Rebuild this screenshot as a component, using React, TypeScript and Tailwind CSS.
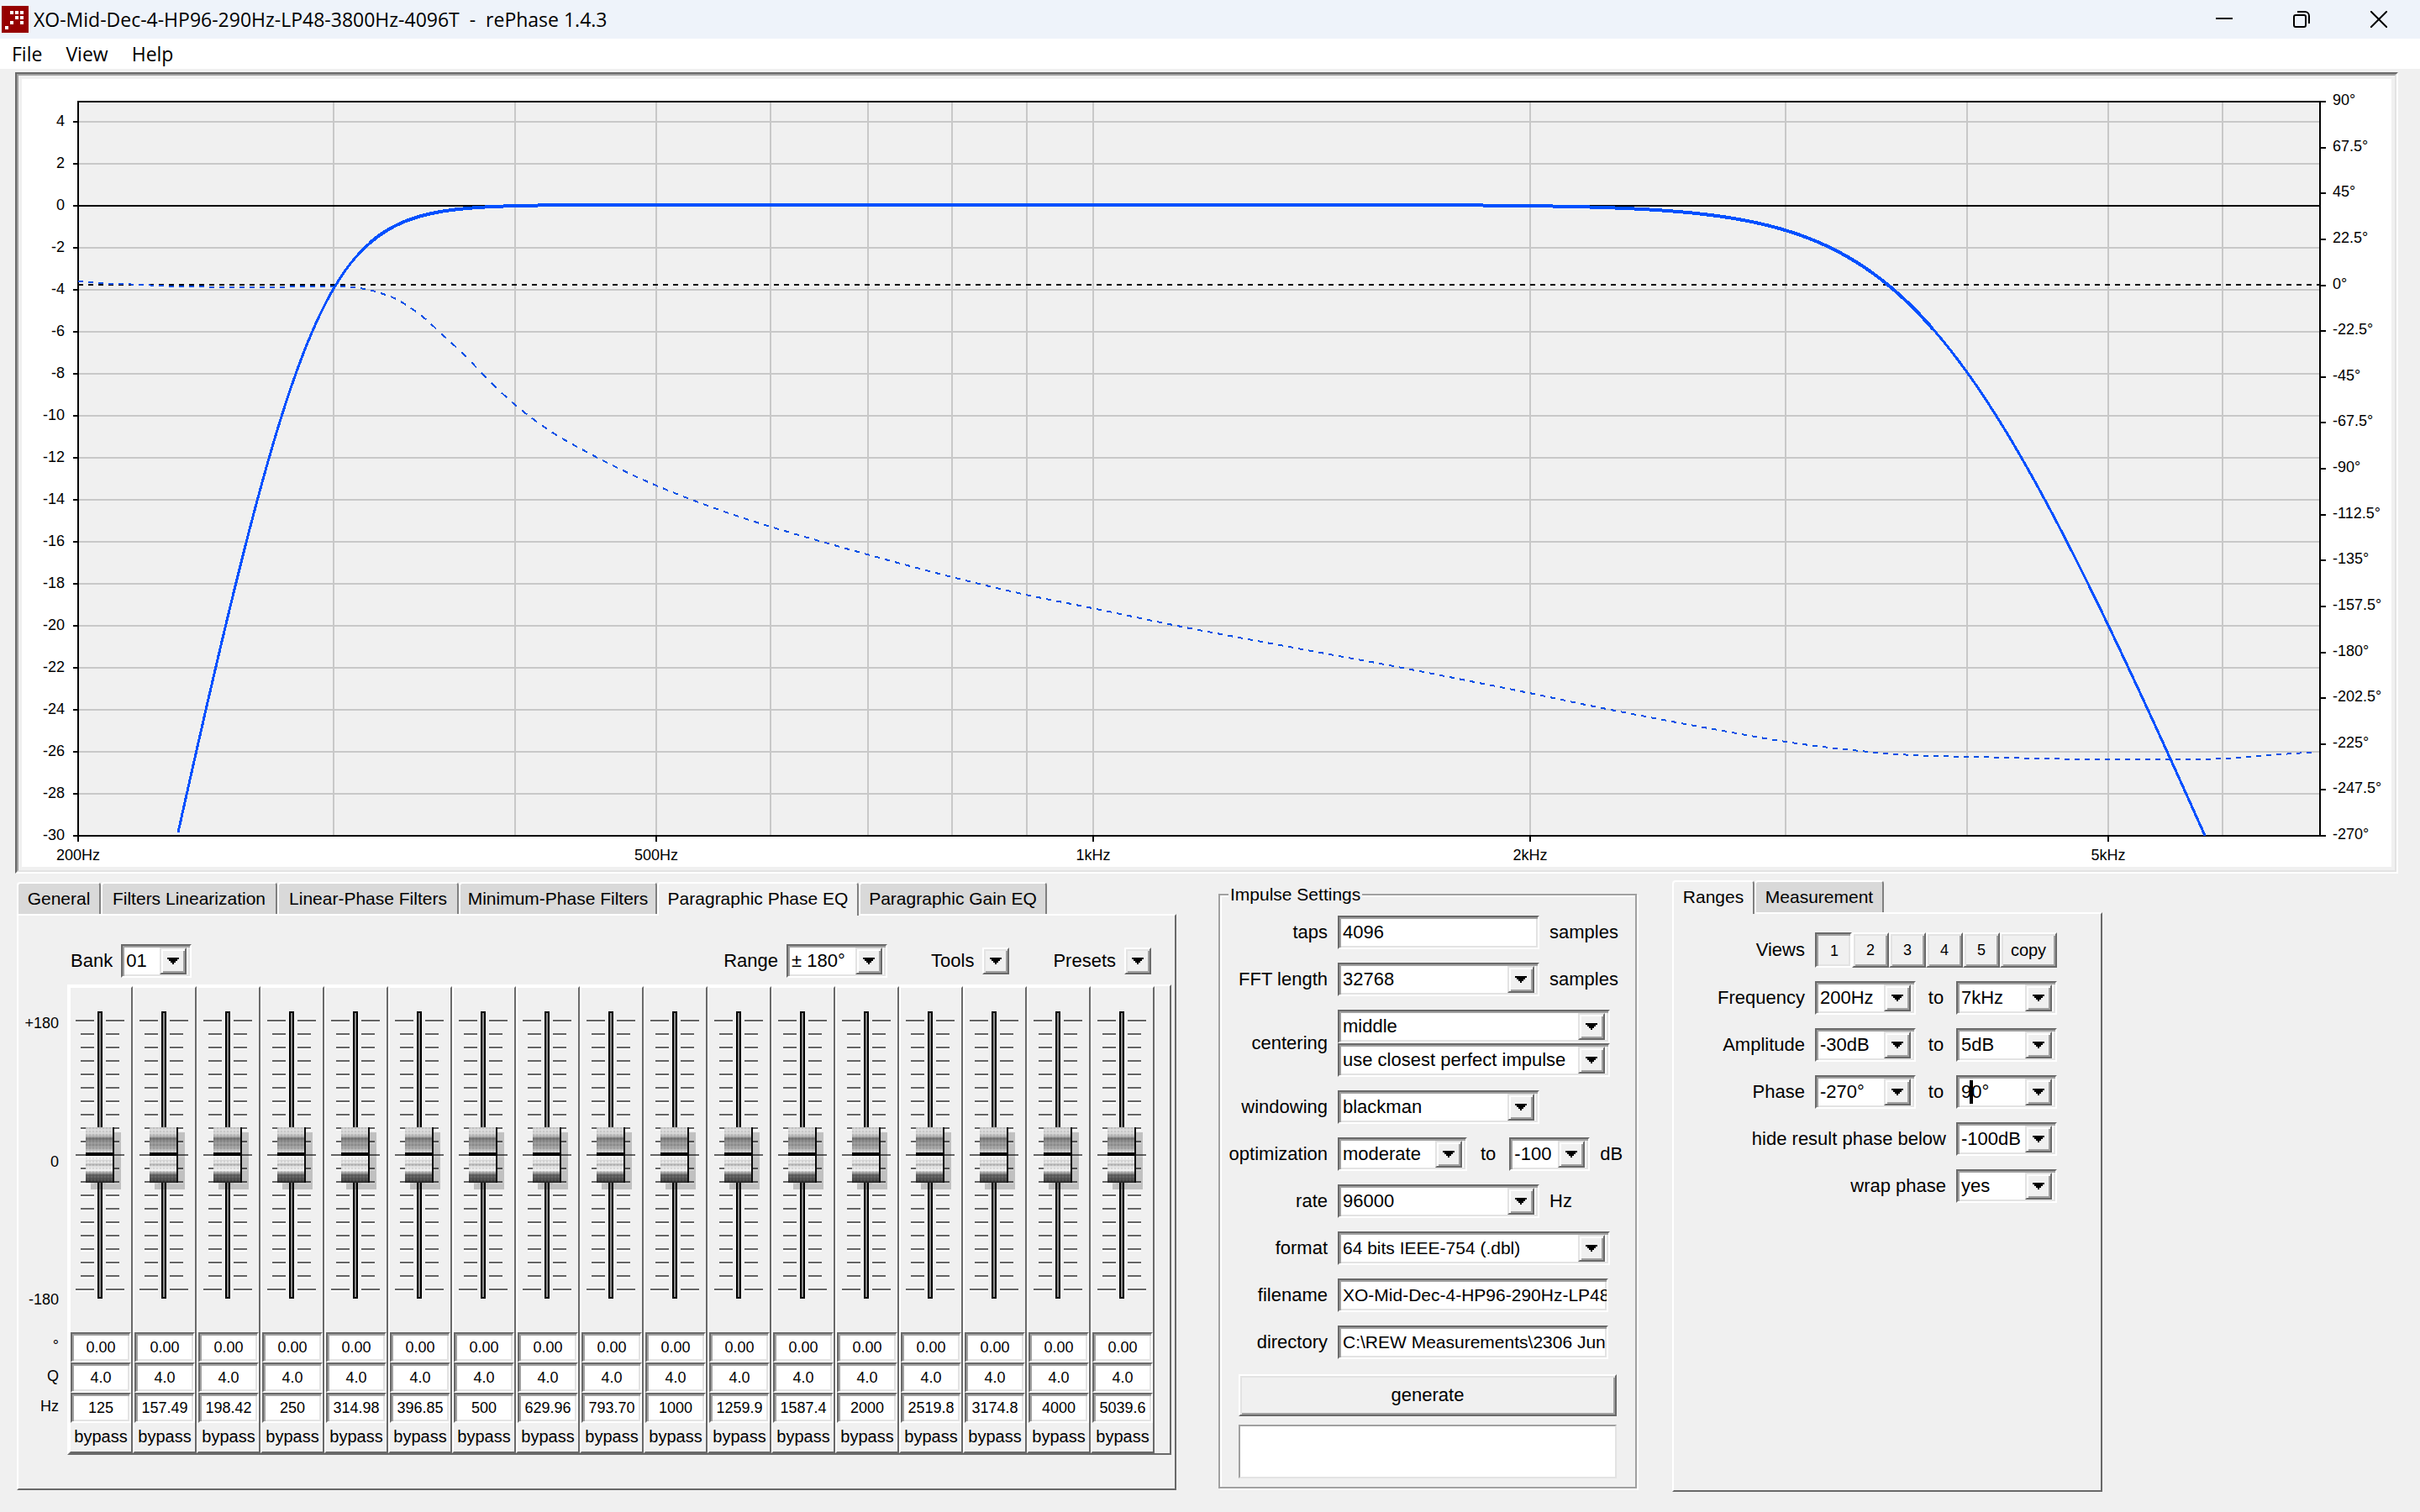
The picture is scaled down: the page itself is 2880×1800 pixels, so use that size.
import React, { useId } from "react";

/* ---------- shared styles ---------- */

const sunken =
  "border-2 border-t-[#696969] border-l-[#696969] border-r-white border-b-white bg-white shadow-[inset_2px_2px_0_#a0a0a0,inset_-2px_-2px_0_#e3e3e3]";
const raised =
  "border-2 border-t-white border-l-white border-r-[#696969] border-b-[#696969] bg-[#f0f0f0] shadow-[inset_2px_2px_0_#e3e3e3,inset_-2px_-2px_0_#a0a0a0]";
const raisedSoft =
  "border-2 border-t-[#e3e3e3] border-l-[#e3e3e3] border-r-[#696969] border-b-[#696969] bg-[#f0f0f0] shadow-[inset_2px_2px_0_#ffffff,inset_-2px_-2px_0_#a0a0a0]";

/* ---------- chart ---------- */

const X0 = 93;
const X1 = 2761;
const Y0 = 121;
const Y1 = 995;
const DECADE = (X1 - X0) / Math.log10(35);

const fx = (f: number) => X0 + DECADE * Math.log10(f / 200);
const dby = (db: number) => 245 - 25 * db;

function magnitude(f: number) {
  const hp = 1 + Math.pow(290 / f, 16);
  const lp = 1 + Math.pow(f / 3800, 8);
  return -20 * Math.log10(hp) - 20 * Math.log10(lp) + 0.05;
}

function magnitudePath(from: number, to: number) {
  const pts: string[] = [];
  for (let x = from; x <= to; x += 1) {
    const f = 200 * Math.pow(10, (x - X0) / DECADE);
    const y = dby(magnitude(f));
    if (y <= Y1) pts.push(`${x} ${y.toFixed(1)}`);
  }
  return "M" + pts.join("L");
}

const PHASE: [number, number][] = [
  [93, 335], [118, 337], [168, 339], [214, 341], [306, 342], [400, 341], [434, 344],
  [462, 352], [477, 359], [503, 377], [526, 398], [551, 421], [580, 451], [613, 482],
  [656, 514], [698, 538], [735, 557], [781, 578], [845, 603], [917, 627], [1032, 660],
  [1133, 687], [1221, 708], [1300, 724], [1396, 744], [1469, 758], [1561, 775], [1653, 792],
  [1745, 810], [1820, 825], [1892, 840], [1974, 856], [2039, 868], [2125, 883], [2204, 893],
  [2277, 899], [2388, 902], [2480, 904], [2580, 904], [2650, 903], [2700, 899], [2761, 895],
];

function phaseY(x: number) {
  let i = 0;
  while (i < PHASE.length - 2 && x > PHASE[i + 1][0]) i++;
  const p0 = PHASE[Math.max(0, i - 1)];
  const p1 = PHASE[i];
  const p2 = PHASE[i + 1];
  const p3 = PHASE[Math.min(PHASE.length - 1, i + 2)];
  const h = p2[0] - p1[0];
  const m1 = ((p2[1] - p0[1]) / (p2[0] - p0[0])) * h;
  const m2 = ((p3[1] - p1[1]) / (p3[0] - p1[0])) * h;
  const t = (x - p1[0]) / h;
  const t2 = t * t;
  const t3 = t2 * t;
  return (
    (2 * t3 - 3 * t2 + 1) * p1[1] + (t3 - 2 * t2 + t) * m1 + (-2 * t3 + 3 * t2) * p2[1] + (t3 - t2) * m2
  );
}

function phasePath() {
  let d = "";
  for (let x = X0; x < X1 - 6; x += 12) {
    d += `M${x} ${phaseY(x).toFixed(1)}L${x + 6} ${phaseY(x + 6).toFixed(1)}`;
  }
  return d;
}

function Chart() {
  const grid = [300, 400, 500, 600, 700, 800, 900, 1000, 2000, 3000, 4000, 5000, 6000];
  const dbs = Array.from({ length: 18 }, (_, i) => 4 - 2 * i);
  const phases = Array.from({ length: 17 }, (_, i) => 90 - 22.5 * i);
  const freqs: [number, string][] = [
    [200, "200Hz"],
    [500, "500Hz"],
    [1000, "1kHz"],
    [2000, "2kHz"],
    [5000, "5kHz"],
  ];
  return (
    <svg
      viewBox="26 94 2820 938"
      className="block h-auto w-full bg-white font-['Liberation_Sans',sans-serif] text-[18px]"
      role="img"
      aria-label="Amplitude and phase response"
    >
      <rect x={X0} y={Y0} width={X1 - X0} height={Y1 - Y0} fill="#f0f0f0" />
      <g stroke="#c8c8c8" strokeWidth="2" shapeRendering="crispEdges">
        {grid.map((f) => (
          <line key={f} x1={Math.round(fx(f))} x2={Math.round(fx(f))} y1={Y0} y2={Y1} />
        ))}
        {dbs.map((d) => (
          <line key={d} x1={X0} x2={X1} y1={dby(d)} y2={dby(d)} />
        ))}
      </g>
      <g stroke="#000" strokeWidth="2" shapeRendering="crispEdges">
        <line x1="87" x2={X1} y1="245" y2="245" />
        <line x1={X0} x2={X1} y1="339" y2="339" strokeDasharray="6 6" />
        <rect x={X0} y={Y0} width={X1 - X0} height={Y1 - Y0} fill="none" />
        {dbs.map((d) => (
          <line key={d} x1="87" x2={X0} y1={dby(d)} y2={dby(d)} />
        ))}
        {phases.map((p, i) => (
          <line key={p} x1={X1} x2="2768" y1={Math.round(Y0 + i * 54.625)} y2={Math.round(Y0 + i * 54.625)} />
        ))}
        {freqs.map(([f]) => (
          <line key={f} x1={Math.round(fx(f))} x2={Math.round(fx(f))} y1={Y1} y2="1002" />
        ))}
      </g>
      <g fill="none" stroke="#0050ff" shapeRendering="crispEdges">
        <path d={phasePath()} strokeWidth="2" stroke="#0a50e6" />
        <path d={magnitudePath(210, 2626)} strokeWidth="3" />
        <path d={magnitudePath(440, 2300)} strokeWidth="4" />
      </g>
      <g fill="#000">
        {dbs.map((d) => (
          <text key={d} x="77" y={dby(d) + 5} textAnchor="end">
            {d}
          </text>
        ))}
        {phases.map((p, i) => (
          <text key={p} x="2776" y={Math.round(Y0 + i * 54.625) + 4}>
            {p}°
          </text>
        ))}
        {freqs.map(([f, label]) => (
          <text key={f} x={Math.round(fx(f))} y="1024" textAnchor="middle">
            {label}
          </text>
        ))}
      </g>
    </svg>
  );
}

/* ---------- controls ---------- */

function Caret() {
  return (
    <svg width="14" height="8" viewBox="0 0 14 8" shapeRendering="crispEdges" aria-hidden="true">
      <path d="M0 0h14v2h-2v2h-2v2h-2v2h-2v-2h-2v-2h-2v-2h-2z" fill="#000" />
    </svg>
  );
}

function Combo({ id, value, label, className }: { id?: string; value: string; label?: string; className: string }) {
  return (
    <div className={`relative h-10 shrink-0 ${className}`}>
      <select
        id={id}
        aria-label={label}
        defaultValue={value}
        className={`h-full w-full appearance-none rounded-none pr-9 pl-1 leading-9 outline-none ${sunken}`}
      >
        <option value={value}>{value}</option>
      </select>
      <span
        className={`pointer-events-none absolute top-1 right-[6px] flex size-8 items-center justify-center ${raisedSoft}`}
      >
        <Caret />
      </span>
    </div>
  );
}

function MenuButton({ id, label }: { id: string; label: string }) {
  return (
    <button id={id} aria-label={label} className={`flex size-8 items-center justify-center ${raised}`}>
      <Caret />
    </button>
  );
}

function Tab({ label, width, active }: { label: string; width: string; active?: boolean }) {
  return (
    <button
      role="tab"
      aria-selected={!!active}
      className={`${width} rounded-t-[4px] border-t-2 border-r-2 border-l-2 border-t-white border-r-[#808080] border-l-white text-[21px] leading-9 whitespace-nowrap ${
        active ? "relative -mb-[2px] h-10 bg-[#f0f0f0] pb-[2px]" : "h-[38px] bg-[#d9d9d9]"
      }`}
    >
      {label}
    </button>
  );
}

const panel =
  "border-2 border-t-white border-l-white border-r-[#696969] border-b-[#696969]";

/* ---------- title bar and menu ---------- */

function Logo() {
  const dots = [
    [10, 6], [16, 6], [22, 6],
    [16, 12], [22, 12],
    [10, 18], [22, 18],
    [4, 24],
  ];
  return (
    <svg width="32" height="32" viewBox="0 0 32 32" shapeRendering="crispEdges" aria-hidden="true">
      <rect width="32" height="32" fill="#960000" />
      {dots.map(([x, y]) => (
        <rect key={`${x}-${y}`} x={x} y={y} width="4" height="4" fill="#fff" />
      ))}
    </svg>
  );
}

function TitleBar() {
  const btn = "flex h-full w-[92px] items-center justify-center";
  return (
    <header className="flex h-[46px] items-center bg-[#eef3fa] pr-[3px] pl-[2px] font-['Open_Sans',sans-serif]">
      <Logo />
      <h1 className="ml-[6px] text-[23px] whitespace-pre">
        XO-Mid-Dec-4-HP96-290Hz-LP48-3800Hz-4096T{"  -  "}rePhase 1.4.3
      </h1>
      <div className="ml-auto flex h-full">
        <button className={btn} aria-label="Minimize">
          <svg width="20" height="20" viewBox="0 0 20 20">
            <path d="M0 9h20" stroke="#000" strokeWidth="2" />
          </svg>
        </button>
        <button className={btn} aria-label="Restore">
          <svg width="20" height="20" viewBox="0 0 20 20" fill="none" stroke="#000" strokeWidth="2">
            <rect x="1" y="5" width="14" height="14" rx="2" />
            <path d="M5 1h9a5 5 0 0 1 5 5v9" />
          </svg>
        </button>
        <button className={btn} aria-label="Close">
          <svg width="20" height="20" viewBox="0 0 20 20" fill="none" stroke="#000" strokeWidth="2">
            <path d="M0 0l20 20M20 0L0 20" />
          </svg>
        </button>
      </div>
    </header>
  );
}

function MenuBar() {
  return (
    <nav className="flex h-9 items-center gap-7 bg-white px-[14px] font-['Open_Sans',sans-serif] text-[23px]">
      <button>File</button>
      <button>View</button>
      <button>Help</button>
    </nav>
  );
}

/* ---------- phase EQ panel ---------- */

const BANDS = [
  "125", "157.49", "198.42", "250", "314.98", "396.85", "500", "629.96", "793.70",
  "1000", "1259.9", "1587.4", "2000", "2519.8", "3174.8", "4000", "5039.6",
];

function Fader() {
  return (
    <svg width="60" height="352" viewBox="0 0 60 352" shapeRendering="crispEdges" aria-hidden="true">
      {Array.from({ length: 21 }, (_, i) => {
        const major = i % 10 === 0;
        const y = 12 + i * 16;
        const a = major ? 0 : 6;
        const w = major ? 22 : 16;
        return (
          <g key={i}>
            <rect x={a} y={y + 2} width={w} height="2" fill="#fff" />
            <rect x="36" y={y + 2} width={w} height="2" fill="#fff" />
            <rect x={a} y={y} width={w} height="2" fill="#646464" />
            <rect x="36" y={y} width={w} height="2" fill="#646464" />
          </g>
        );
      })}
      <rect x="26" y="2" width="6" height="342" fill="#000" />
      <rect x="28" y="4" width="2" height="338" fill="#8c8c8c" />
      <rect x="18" y="146" width="36" height="68" fill="#000" fillOpacity="0.2" />
      <rect x="12" y="140" width="34" height="66" fill="url(#knob)" />
      <rect x="12" y="140" width="34" height="66" fill="url(#knurl)" />
      <rect x="12" y="170" width="34" height="4" fill="#000" />
      <rect x="44" y="140" width="2" height="66" fill="#0a0a0a" />
    </svg>
  );
}

function KnobPaint() {
  return (
    <svg className="absolute size-0" aria-hidden="true">
      <defs>
        <linearGradient id="knob" x1="0" y1="0" x2="0" y2="1">
          <stop offset="0" stopColor="#c8c8c8" />
          <stop offset="0.05" stopColor="#dcdcdc" />
          <stop offset="0.12" stopColor="#d2d2d2" />
          <stop offset="0.16" stopColor="#b4b4b4" />
          <stop offset="0.21" stopColor="#6e6e6e" />
          <stop offset="0.26" stopColor="#969696" />
          <stop offset="0.33" stopColor="#969696" />
          <stop offset="0.4" stopColor="#b4b4b4" />
          <stop offset="0.45" stopColor="#dcdcdc" />
          <stop offset="0.53" stopColor="#f0f0f0" />
          <stop offset="0.57" stopColor="#f5f5f5" />
          <stop offset="0.6" stopColor="#d2d2d2" />
          <stop offset="0.63" stopColor="#f0f0f0" />
          <stop offset="0.67" stopColor="#b4b4b4" />
          <stop offset="0.71" stopColor="#e1e1e1" />
          <stop offset="0.78" stopColor="#f0f0f0" />
          <stop offset="0.82" stopColor="#a0a0a0" />
          <stop offset="0.86" stopColor="#5f5f5f" />
          <stop offset="0.93" stopColor="#555555" />
          <stop offset="1" stopColor="#232323" />
        </linearGradient>
        <pattern id="knurl" width="4" height="4" patternUnits="userSpaceOnUse">
          <rect width="2" height="2" fill="#000" fillOpacity="0.08" />
          <rect x="2" y="2" width="2" height="2" fill="#fff" fillOpacity="0.08" />
        </pattern>
      </defs>
    </svg>
  );
}

function Channel({ hz }: { hz: string }) {
  const field = `block h-9 w-full rounded-none px-0 text-center text-[18px] leading-8 outline-none ${sunken}`;
  return (
    <div className="flex w-[76px] flex-col border-2 border-t-white border-r-[#696969] border-b-[#696969] border-l-white">
      <div className="relative mt-[26px] mb-8 pl-[6px]">
        <Fader />
        <input
          type="range"
          min={-180}
          max={180}
          defaultValue={0}
          aria-label={`${hz} Hz phase`}
          className="absolute inset-0 h-full w-full opacity-0 [direction:rtl] [writing-mode:vertical-lr]"
        />
      </div>
      <input className={field} defaultValue="0.00" aria-label={`${hz} Hz angle`} />
      <input className={field} defaultValue="4.0" aria-label={`${hz} Hz Q`} />
      <input className={field} defaultValue={hz} aria-label={`${hz} Hz frequency`} />
      <button className="h-[34px] pb-[2px] text-[20px] leading-7">bypass</button>
    </div>
  );
}

function EqPanel() {
  return (
    <section className="mt-[10px] w-[1380px]">
      <div role="tablist" className="flex">
        <Tab label="General" width="w-[100px]" />
        <Tab label="Filters Linearization" width="w-[210px]" />
        <Tab label="Linear-Phase Filters" width="w-[216px]" />
        <Tab label="Minimum-Phase Filters" width="w-[236px]" />
        <Tab label="Paragraphic Phase EQ" width="w-[240px]" active />
        <Tab label="Paragraphic Gain EQ" width="w-[224px]" />
      </div>
      <div className={`${panel} pt-[34px] pb-10`}>
        <div className="flex items-center justify-between pr-7 pl-[62px]">
          <div className="flex items-center gap-[10px]">
            <label htmlFor="bank">Bank</label>
            <Combo id="bank" value="01" className="w-[84px]" />
          </div>
          <div className="flex items-center gap-[52px]">
            <div className="flex items-center gap-[10px]">
              <label htmlFor="range">Range</label>
              <Combo id="range" value="± 180°" className="w-[120px]" />
            </div>
            <div className="flex items-center gap-[10px]">
              <label htmlFor="tools">Tools</label>
              <MenuButton id="tools" label="Tools" />
            </div>
            <div className="flex items-center gap-[10px]">
              <label htmlFor="presets">Presets</label>
              <MenuButton id="presets" label="Presets" />
            </div>
          </div>
        </div>
        <div className="mt-2 flex pr-1">
          <div className="w-[58px] pt-[34px] pr-[10px] text-right text-[18px] leading-6">
            <div className="flex h-[353px] flex-col justify-between">
              <span>+180</span>
              <span>0</span>
              <span>-180</span>
            </div>
            <div className="mt-[25px] leading-9">
              <div>°</div>
              <div>Q</div>
              <div>Hz</div>
            </div>
          </div>
          <div className={`${panel} flex flex-1`}>
            <KnobPaint />
            {BANDS.map((hz) => (
              <Channel key={hz} hz={hz} />
            ))}
          </div>
        </div>
      </div>
    </section>
  );
}

/* ---------- impulse settings ---------- */

function Row({
  label,
  suffix,
  children,
}: {
  label: string;
  suffix?: string;
  children: (id: string) => React.ReactNode;
}) {
  const id = useId();
  return (
    <div className="flex items-center gap-3">
      <label htmlFor={id} className="w-32 shrink-0 text-right">
        {label}
      </label>
      {children(id)}
      {suffix && <span>{suffix}</span>}
    </div>
  );
}

const textField = `h-10 shrink-0 rounded-none pl-1 pr-0 outline-none ${sunken}`;

function ImpulseSettings() {
  return (
    <fieldset className="mt-[11px] w-[498px] border-2 border-[#a0a0a0] pt-[11px] pb-[10px] shadow-[inset_2px_2px_0_#fff,2px_2px_0_#fff]">
      <legend className="ml-[10px] bg-[#f0f0f0] px-[2px] text-[21px] leading-7">Impulse Settings</legend>
      <div className="flex flex-col gap-4">
        <Row label="taps" suffix="samples">
          {(id) => <input id={id} defaultValue="4096" className={`w-60 ${textField}`} />}
        </Row>
        <Row label="FFT length" suffix="samples">
          {(id) => <Combo id={id} value="32768" className="w-60" />}
        </Row>
        <Row label="centering">
          {(id) => (
            <div>
              <Combo id={id} value="middle" className="w-[324px]" />
              <Combo value="use closest perfect impulse" label="centering mode" className="w-[324px]" />
            </div>
          )}
        </Row>
        <Row label="windowing">{(id) => <Combo id={id} value="blackman" className="w-60" />}</Row>
        <Row label="optimization">
          {(id) => (
            <>
              <Combo id={id} value="moderate" className="w-[154px]" />
              <span className="mx-1">to</span>
              <Combo value="-100" label="optimization limit" className="w-24" />
              <span>dB</span>
            </>
          )}
        </Row>
        <Row label="rate" suffix="Hz">
          {(id) => <Combo id={id} value="96000" className="w-60" />}
        </Row>
        <Row label="format">
          {(id) => <Combo id={id} value="64 bits IEEE-754 (.dbl)" className="w-[324px] text-[21px]" />}
        </Row>
        <Row label="filename">
          {(id) => (
            <input
              id={id}
              defaultValue="XO-Mid-Dec-4-HP96-290Hz-LP48-3800Hz-4096T"
              className={`w-[322px] text-[21px] ${textField}`}
            />
          )}
        </Row>
        <Row label="directory">
          {(id) => (
            <input
              id={id}
              defaultValue="C:\REW Measurements\2306 Jun"
              className={`w-[322px] text-[21px] ${textField}`}
            />
          )}
        </Row>
      </div>
      <div className="mx-[22px] mt-[18px] flex flex-col gap-[10px]">
        <button className={`h-[50px] ${raised}`}>generate</button>
        <output
          aria-label="Status"
          className="h-16 border-2 border-t-[#a0a0a0] border-r-[#e3e3e3] border-b-[#e3e3e3] border-l-[#a0a0a0] bg-white"
        />
      </div>
    </fieldset>
  );
}

/* ---------- ranges panel ---------- */

function RangeRow({ label, from, to, caret }: { label: string; from: string; to: string; caret?: boolean }) {
  const id = useId();
  return (
    <div className="flex items-center gap-3">
      <label htmlFor={id} className="w-[156px] text-right">
        {label}
      </label>
      <div className="flex items-center">
        <Combo id={id} value={from} className="w-[120px]" />
        <span className="w-12 text-center">to</span>
        <div className="relative">
          <Combo value={to} label={`${label} upper limit`} className="w-[120px]" />
          {caret && <span className="absolute top-[6px] left-[16px] h-7 w-1 bg-black" />}
        </div>
      </div>
    </div>
  );
}

function WideRow({ label, value }: { label: string; value: string }) {
  const id = useId();
  return (
    <div className="flex items-center gap-3">
      <label htmlFor={id} className="w-[324px] text-right">
        {label}
      </label>
      <Combo id={id} value={value} className="w-[120px]" />
    </div>
  );
}

function RangesPanel() {
  return (
    <section className="mt-2 w-[512px]">
      <div role="tablist" className="flex">
        <Tab label="Ranges" width="w-[98px]" active />
        <Tab label="Measurement" width="w-[154px]" />
      </div>
      <div className={`${panel} flex h-[690px] flex-col gap-4 pt-[22px]`}>
        <div className="flex items-center gap-3">
          <span className="w-[156px] text-right">Views</span>
          <div className="flex">
            <button
              aria-pressed="true"
              className="h-[42px] w-11 border-2 border-t-[#696969] border-r-white border-b-white border-l-[#696969] pt-[2px] pl-[2px] text-[18px] shadow-[inset_2px_2px_0_#a0a0a0,inset_-2px_-2px_0_#e3e3e3]"
            >
              1
            </button>
            {["2", "3", "4", "5"].map((n) => (
              <button key={n} className={`h-[42px] w-11 text-[18px] ${raised}`}>
                {n}
              </button>
            ))}
            <button className={`h-[42px] w-[68px] text-[20px] ${raised}`}>copy</button>
          </div>
        </div>
        <RangeRow label="Frequency" from="200Hz" to="7kHz" />
        <RangeRow label="Amplitude" from="-30dB" to="5dB" />
        <RangeRow label="Phase" from="-270°" to="90°" caret />
        <WideRow label="hide result phase below" value="-100dB" />
        <WideRow label="wrap phase" value="yes" />
      </div>
    </section>
  );
}

/* ---------- page ---------- */

export default function App() {
  return (
    <div className="min-h-screen bg-[#f0f0f0] font-['Liberation_Sans',sans-serif] text-[22px] leading-7 text-black">
      <TitleBar />
      <MenuBar />
      <main>
        <div className="mt-1 mr-[26px] ml-[18px] border-2 border-t-[#696969] border-r-white border-b-white border-l-[#696969]">
          <div className="border-2 border-t-[#a0a0a0] border-r-[#e3e3e3] border-b-[#e3e3e3] border-l-[#a0a0a0] p-1">
            <Chart />
          </div>
        </div>
        <div className="flex flex-wrap items-start pl-5">
          <EqPanel />
          <div className="w-[50px]" />
          <ImpulseSettings />
          <div className="w-[42px]" />
          <RangesPanel />
        </div>
      </main>
    </div>
  );
}
